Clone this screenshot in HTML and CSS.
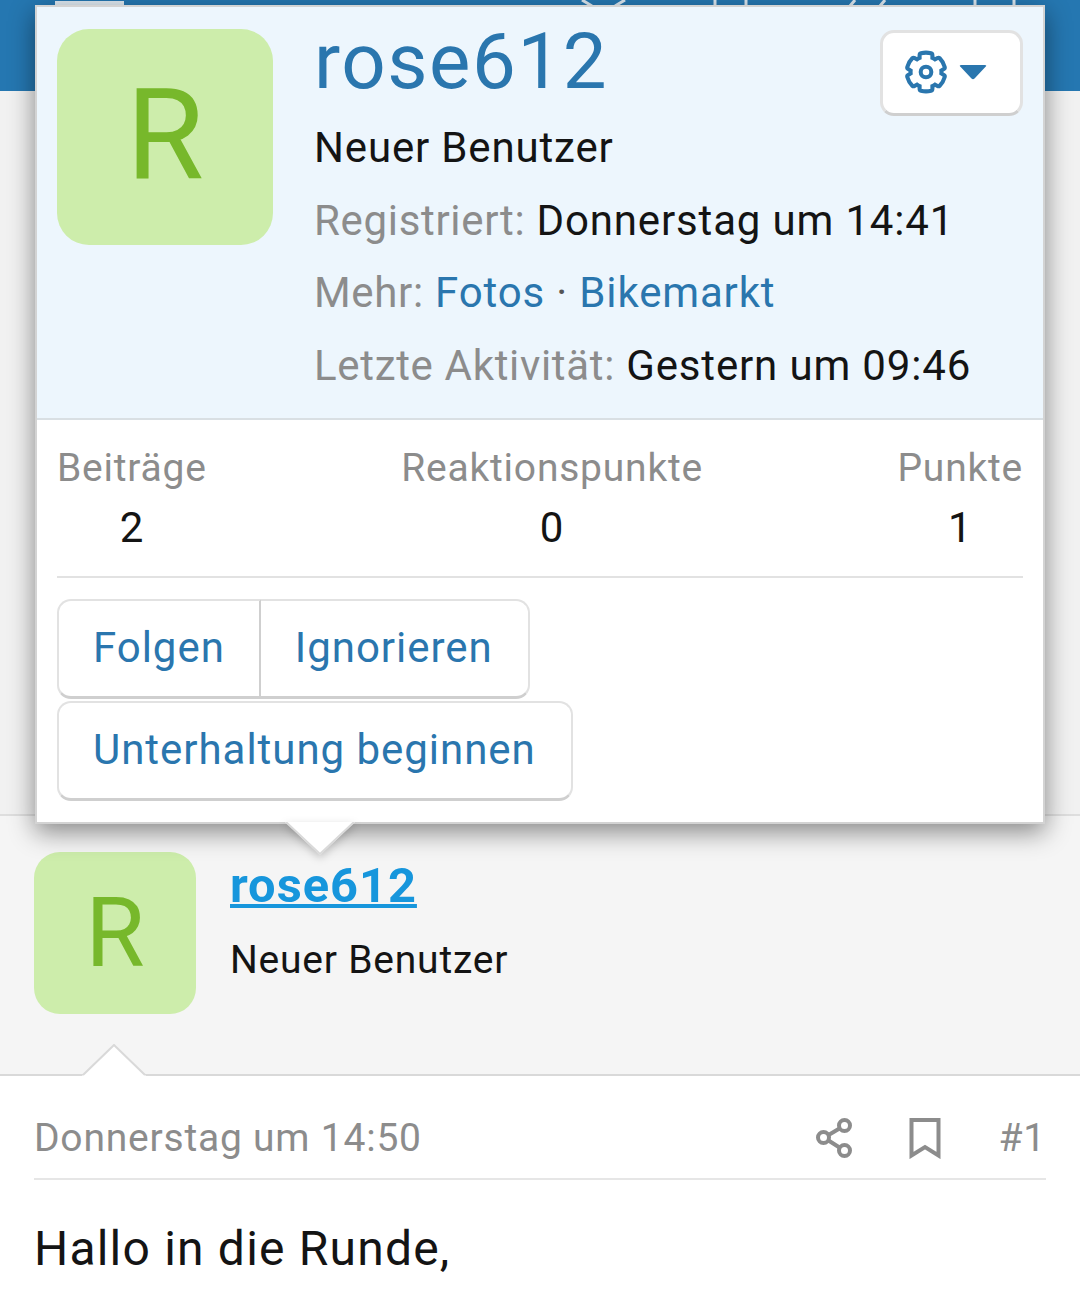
FILE: index.html
```html
<!DOCTYPE html>
<html lang="de">
<head>
<meta charset="utf-8">
<title>rose612</title>
<link rel="stylesheet" href="styles.css">
</head>
<body>
<div class="page">
  <header class="topbar">
    <svg class="topmarks" width="1080" height="8" viewBox="0 0 1080 8">
      <rect class="tab" x="55" y="1" width="69" height="7"/>
      <path class="mark" d="M582 0l10 6M625 0l-10 6M715 0v6M746 0v6M850 6l5-6M885 0l-5 6M975 0v6M1014 0v6"/>
    </svg>
  </header>
  <div class="backdrop"></div>

  <section class="author">
    <div class="avatar avatar-small">R</div>
    <div class="author-text">
      <a class="author-name" href="#">rose612</a>
      <div class="author-title">Neuer Benutzer</div>
    </div>
    <svg class="post-notch" width="64" height="32" viewBox="0 0 64 32">
      <path class="notch-fill" d="M0 32L32 1l32 31z"/>
      <path class="notch-line" d="M1 31L32 1l31 30"/>
    </svg>
  </section>

  <article class="post">
    <div class="post-meta">
      <span class="post-date">Donnerstag um 14:50</span>
      <div class="post-actions">
        <svg class="icon-share" width="38" height="42" viewBox="0 0 38 42">
          <circle cx="28.500" cy="8.500" r="5.500"/>
          <circle cx="7.500" cy="20.500" r="5.500"/>
          <circle cx="28.500" cy="33.500" r="5.500"/>
          <path d="M12.500 18l11-6.500M12.500 23.500l11 7"/>
        </svg>
        <svg class="icon-bookmark" width="32" height="42" viewBox="0 0 32 42">
          <path d="M2.500 3h27v35.500L16 30 2.500 38.500z"/>
        </svg>
        <span class="post-num">#1</span>
      </div>
    </div>
    <p class="post-body">Hallo in die Runde,</p>
  </article>

  <div class="popup">
    <div class="popup-head">
      <div class="avatar avatar-large">R</div>
      <div class="popup-info">
        <h1 class="popup-name">rose612</h1>
        <div class="popup-row">Neuer Benutzer</div>
        <div class="popup-row"><span class="muted">Registriert:</span> Donnerstag um 14:41</div>
        <div class="popup-row"><span class="muted">Mehr:</span> <a href="#">Fotos</a> <span class="muted-dot">·</span> <a href="#">Bikemarkt</a></div>
        <div class="popup-row"><span class="muted">Letzte Aktivität:</span> Gestern um 09:46</div>
      </div>
      <button class="gear-button" type="button">
        <svg class="icon-gear" width="40" height="40" viewBox="0 0 512 512">
          <path d="M452.515 237l31.843-18.382c9.426-5.441 13.996-16.542 11.177-27.054-11.404-42.531-33.842-80.547-64.058-110.797-7.68-7.688-19.575-9.246-28.985-3.811l-31.785 18.358a196.276 196.276 0 0 0-32.899-19.02V39.541a24.016 24.016 0 0 0-17.842-23.206c-41.761-11.107-86.117-11.121-127.93-.001-10.519 2.798-17.844 12.321-17.844 23.206v36.753a196.276 196.276 0 0 0-32.899 19.02l-31.785-18.358c-9.41-5.435-21.305-3.877-28.985 3.811-30.216 30.25-52.654 68.265-64.058 110.797-2.819 10.512 1.751 21.613 11.177 27.054L59.485 237a197.715 197.715 0 0 0 0 38L27.642 293.382c-9.426 5.441-13.996 16.542-11.177 27.054 11.404 42.531 33.842 80.547 64.058 110.797 7.68 7.688 19.575 9.246 28.985 3.811l31.785-18.358a196.202 196.202 0 0 0 32.899 19.02v36.753a24.016 24.016 0 0 0 17.842 23.206c41.761 11.107 86.117 11.122 127.93.001 10.519-2.798 17.844-12.321 17.844-23.206v-36.753a196.34 196.34 0 0 0 32.899-19.02l31.785 18.358c9.41 5.435 21.305 3.877 28.985-3.811 30.216-30.25 52.654-68.266 64.058-110.797 2.819-10.512-1.751-21.613-11.177-27.054L452.515 275c1.22-12.65 1.22-25.35 0-38z"/>
          <circle cx="256" cy="256" r="68"/>
        </svg>
        <svg class="icon-caret" width="28" height="16" viewBox="0 0 28 16"><path d="M2 1h24q2 0 .8 1.600L15.500 14.500q-1.500 1.500-3 0L1.200 2.600Q0 1 2 1z"/></svg>
      </button>
    </div>
    <div class="popup-body">
      <div class="stats">
        <div class="stat"><div class="stat-label">Beiträge</div><div class="stat-value">2</div></div>
        <div class="stat"><div class="stat-label">Reaktionspunkte</div><div class="stat-value">0</div></div>
        <div class="stat"><div class="stat-label">Punkte</div><div class="stat-value">1</div></div>
      </div>
      <div class="btn-group">
        <a class="btn btn-left" href="#">Folgen</a><a class="btn btn-right" href="#">Ignorieren</a>
      </div>
      <div class="btn-group btn-group-second">
        <a class="btn btn-single" href="#">Unterhaltung beginnen</a>
      </div>
    </div>
    <svg class="popup-arrow" width="70" height="34" viewBox="0 0 70 34">
      <path class="notch-fill" d="M0 0l35 33L70 0z"/>
      <path class="notch-line" d="M1 0l34 32L69 0"/>
    </svg>
  </div>
</div>
</body>
</html>
```
FILE: styles.css
```css
* { box-sizing: border-box; letter-spacing: .02em; }
html, body { margin: 0; padding: 0; }
body {
  width: 1080px;
  height: 1311px;
  overflow: hidden;
  background: #fff;
  color: #141414;
  font-family: Roboto, "Liberation Sans", sans-serif;
}
a { color: #2a76ae; text-decoration: none; }
.page { position: relative; height: 1311px; overflow: hidden; }

.topbar { height: 91px; background: #2577b1; }
.topmarks { display: block; }
.tab { fill: #dfe9f1; }
.mark { fill: none; stroke: #dbe7f0; stroke-width: 3; }

.backdrop { height: 725px; background: #f1f1f1; border-bottom: 2px solid #dedede; }

.avatar {
  flex: none;
  display: flex;
  align-items: center;
  justify-content: center;
  background: #cdedab;
  color: #77b82b;
  letter-spacing: 0;
}
.avatar-large { width: 216px; height: 216px; margin-top: 22px; padding-bottom: 4px; border-radius: 32px; font-size: 126px; }
.avatar-small { width: 162px; height: 162px; border-radius: 26px; font-size: 96px; }

.author {
  position: relative;
  display: flex;
  gap: 34px;
  height: 260px;
  padding: 36px 34px 0;
  background: #f5f5f5;
  border-bottom: 2px solid #d9d9d9;
}
.author-name {
  display: block;
  height: 68px;
  color: #1796dc;
  font-size: 48.800px;
  font-weight: 700;
  line-height: 68px;
  text-decoration: underline;
  text-decoration-thickness: 4px;
}
.author-title { font-size: 39px; line-height: 80px; }
.post-notch { position: absolute; left: 82px; bottom: -2px; }
.notch-fill { fill: #fff; }
.notch-line { fill: none; stroke: #d9d9d9; stroke-width: 2; }

.post { padding: 0 34px; background: #fff; }
.post-meta {
  display: flex;
  justify-content: space-between;
  align-items: center;
  height: 104px;
  padding-top: 22px;
  border-bottom: 2px solid #e6e6e6;
  color: #8c8c8c;
  font-size: 39px;
}
.post-actions { display: flex; align-items: center; }
.icon-share { margin-right: 55px; fill: none; stroke: #8c8c8c; stroke-width: 4; }
.icon-bookmark { margin-right: 58px; fill: none; stroke: #8c8c8c; stroke-width: 4; }
.post-body { margin: 36px 0 0; font-size: 48px; line-height: 66px; letter-spacing: .025em; }

.popup {
  position: absolute;
  left: 35px;
  top: 5px;
  width: 1010px;
  background: #fff;
  border: 2px solid #d3d3d3;
  box-shadow: 0 8px 24px rgba(0, 0, 0, .45);
}
.popup-head {
  display: flex;
  height: 413px;
  padding-left: 20px;
  gap: 41px;
  background: #edf6fd;
  border-bottom: 2px solid #d9dfe3;
}
.popup-info { flex: 1; min-width: 0; }
.popup-name {
  margin: 0;
  height: 105px;
  padding-top: 2px;
  color: #2a76ae;
  font-size: 78px;
  font-weight: 400;
  line-height: 105px;
}
.popup-row { height: 72.5px; font-size: 42px; line-height: 72.5px; white-space: nowrap; }
.muted { color: #8c8c8c; letter-spacing: .016em; }
.muted-dot { color: #555; }

.gear-button {
  position: absolute;
  right: 20px;
  top: 23px;
  display: flex;
  align-items: center;
  gap: 13px;
  width: 143px;
  height: 86px;
  padding: 0 0 2px 23px;
  background: #fff;
  border: 3px solid #e2e2e2;
  border-bottom-color: #cfcfcf;
  border-radius: 14px;
}
.icon-gear { overflow: visible; fill: none; stroke: #2a76ae; stroke-width: 52; }
.icon-caret { fill: #2a76ae; }

.popup-body { padding: 0 20px 21px; }
.stats {
  display: flex;
  justify-content: space-between;
  padding: 18px 0;
  border-bottom: 2px solid #e2e2e2;
  text-align: center;
  font-size: 39px;
  line-height: 60px;
}
.stat-label { color: #8c8c8c; }
.stat-value { color: #141414; font-size: 42px; }

.btn-group { display: flex; margin-top: 21px; }
.btn-group-second { margin-top: 2px; }
.btn {
  display: block;
  height: 100px;
  background: #fff;
  border: 2px solid #e2e2e2;
  border-bottom: 3px solid #cfcfcf;
  font-size: 42px;
  line-height: 94px;
  letter-spacing: .023em;
}
.btn-left { padding: 0 34px; border-radius: 14px 0 0 14px; border-right-color: #cfcfcf; }
.btn-right { padding: 0 35px 0 34px; border-left: 0; border-radius: 0 14px 14px 0; }
.btn-single { padding: 0 35px 0 34px; border-radius: 14px; }

.popup-arrow {
  position: absolute;
  left: 248px;
  bottom: -34px;
  filter: drop-shadow(0 3px 4px rgba(0, 0, 0, .2));
}
```
